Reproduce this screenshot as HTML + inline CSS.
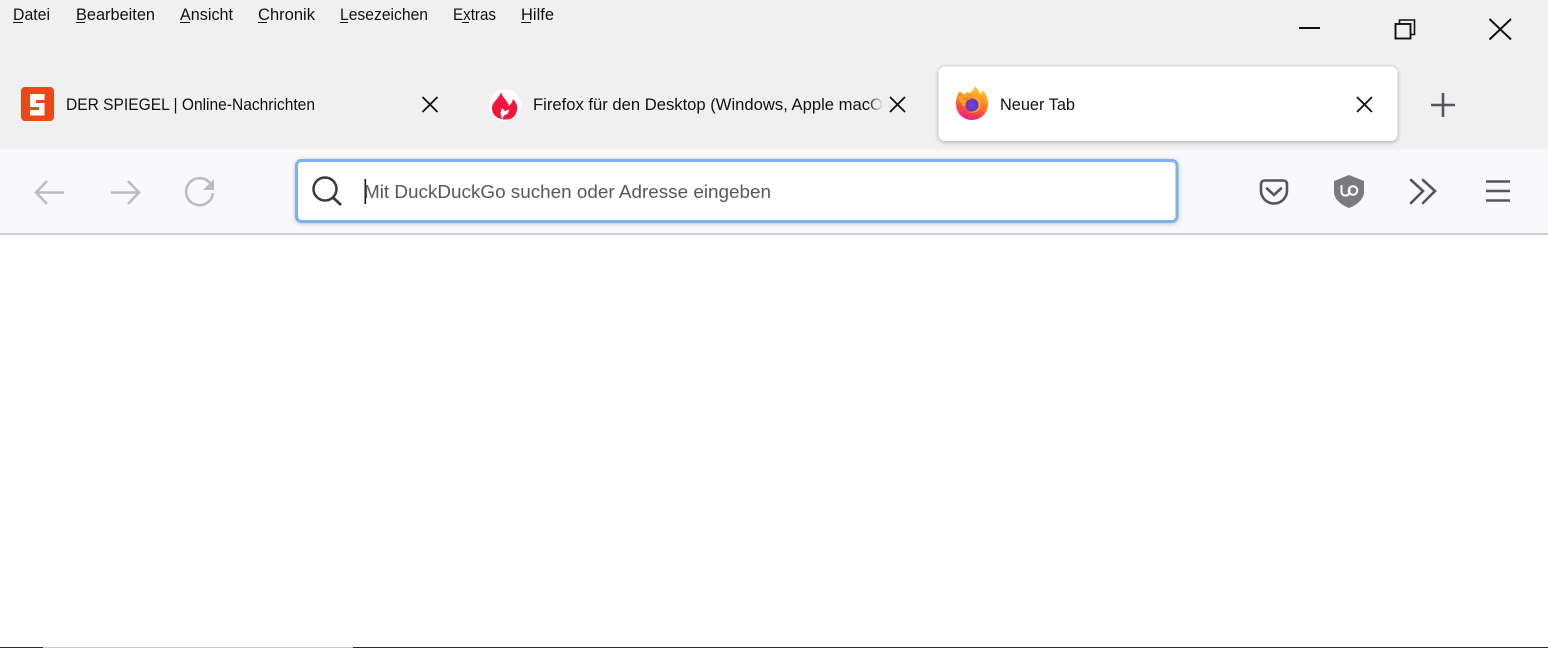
<!DOCTYPE html>
<html lang="de"><head><meta charset="utf-8"><title>Neuer Tab</title>
<style>
html,body{margin:0;padding:0;width:1548px;height:648px;overflow:hidden;background:#fff}
svg{display:block}
text{font-family:"Liberation Sans",sans-serif}
</style></head><body>
<svg width="1548" height="648" viewBox="0 0 1548 648" xmlns="http://www.w3.org/2000/svg">
<defs>
<filter id="s" x="-5%" y="-20%" width="110%" height="140%"><feDropShadow dx="0" dy="1" stdDeviation="2.5" flood-color="#000" flood-opacity=".32"/></filter>
<filter id="u" x="-5%" y="-20%" width="110%" height="140%"><feDropShadow dx="0" dy="1" stdDeviation="2" flood-color="#000" flood-opacity=".22"/></filter>
<linearGradient id="fade" x1="0" x2="1" y1="0" y2="0"><stop offset="0" stop-color="#f0f0f0" stop-opacity="0"/><stop offset="1" stop-color="#f0f0f0"/></linearGradient>
<linearGradient id="ff" x1=".75" y1="0" x2=".4" y2="1"><stop offset="0" stop-color="#ffd52e"/><stop offset=".35" stop-color="#ff9a1f"/><stop offset=".75" stop-color="#ff4a3a"/><stop offset="1" stop-color="#f01c8e"/></linearGradient>
<radialGradient id="fi"><stop offset="0" stop-color="#7a3fd0"/><stop offset="1" stop-color="#5b3ab8"/></radialGradient>
</defs>
<rect width="1548" height="149.500" fill="#f0f0f0"/>
<rect y="149.500" width="1548" height="83.500" fill="#f9f9fb"/>
<rect y="233" width="1548" height="2" fill="#cfcfd1"/>
<rect y="647" width="43" height="1" fill="#2b2b2b"/>
<rect x="43" y="647" width="310" height="1" fill="#c8c8c8"/>
<rect x="353" y="647" width="1195" height="1" fill="#2b2b2b"/>

<g font-size="16.5" fill="#111">
<text x="13" y="20" textLength="37" lengthAdjust="spacingAndGlyphs">Datei</text>
<text x="76" y="20" textLength="79" lengthAdjust="spacingAndGlyphs">Bearbeiten</text>
<text x="180" y="20" textLength="53" lengthAdjust="spacingAndGlyphs">Ansicht</text>
<text x="258" y="20" textLength="57" lengthAdjust="spacingAndGlyphs">Chronik</text>
<text x="340" y="20" textLength="88" lengthAdjust="spacingAndGlyphs">Lesezeichen</text>
<text x="453" y="20" textLength="43" lengthAdjust="spacingAndGlyphs">Extras</text>
<text x="521" y="20" textLength="33" lengthAdjust="spacingAndGlyphs">Hilfe</text>
</g>
<g fill="#111">
<rect x="13" y="22" width="10" height="1"/><rect x="76" y="22" width="9" height="1"/><rect x="180" y="22" width="10" height="1"/><rect x="258" y="22" width="9" height="1"/><rect x="340" y="22" width="8" height="1"/><rect x="462" y="22" width="7" height="1"/><rect x="521" y="22" width="10" height="1"/>
</g>

<g fill="none" stroke="#111" stroke-width="1.900">
<path d="M1299 28H1320"/>
<rect x="1395.500" y="24" width="15" height="14.500"/>
<path d="M1399.500 23.500V20H1414.500V34.500H1410.500" stroke-width="1.600"/>
<path d="M1489.500 19L1511 39.500M1511 19L1489.500 39.500"/>
</g>

<!-- Spiegel tab -->
<rect x="21" y="87" width="33" height="34" rx="4" fill="#ea4816"/>
<rect x="30" y="94" width="14.500" height="21.500" fill="#fff"/>
<rect x="36" y="100" width="8.500" height="3" fill="#ea4816"/>
<rect x="30" y="107" width="9" height="3" fill="#ea4816"/>
<text x="66" y="110" font-size="16.500" fill="#111" textLength="249" lengthAdjust="spacingAndGlyphs">DER SPIEGEL | Online-Nachrichten</text>
<path d="M422.500 97L437.500 112M437.500 97L422.500 112" stroke="#111" stroke-width="1.800" fill="none"/>

<!-- Firefox page tab -->
<circle cx="505" cy="105" r="16" fill="#fff"/>
<path d="M501 92C502 97 507 100 509 106C511 104 512.500 102 513 99C516 102 518 106 517 110C516 116 512 119.500 507 119.500C499 120 492 116 492 108C492 102 499 99 501 92Z" fill="#f5143c"/>
<path d="M502 108L505 111L509.500 109.500L507.500 114L504 115.500L502 119.500L500.500 113Z" fill="#fff"/>
<text x="533" y="110" font-size="16.500" fill="#111" textLength="361" lengthAdjust="spacingAndGlyphs">Firefox für den Desktop (Windows, Apple macOS</text>
<rect x="868" y="92" width="15" height="26" fill="url(#fade)"/>
<rect x="883" y="90" width="30" height="30" fill="#f0f0f0"/>
<path d="M890 97L905 112M905 97L890 112" stroke="#111" stroke-width="1.800" fill="none"/>

<!-- Active tab -->
<rect x="938.500" y="66.500" width="459" height="74.500" rx="7" fill="#fff" filter="url(#s)"/>
<path d="M960 91C957 95 956 99 956 104C956 113 963 120 972 120C981 120 988 113 988 104C988 98 986 93 982 90C982 93 981 93 980 94C979 91 977 88 975 86C974 89 972 92 970 93C967 92 966 92 965 94C963 94 961 93 960 91Z" fill="url(#ff)"/>
<path d="M958 97C963 93 971 94 975 96C980 98 982 103 980 108C978 112 973 114 969 112C973 112 975 110 974 108L964 106C961 104 959 101 958 97Z" fill="#ffa126"/>
<circle cx="972" cy="105" r="6.500" fill="url(#fi)"/>
<path d="M963 97.500C966 96.500 970 96.500 973 98L968 100.500H963Z" fill="#ff8a1f"/>
<text x="1000" y="110" font-size="16.500" fill="#111" textLength="75" lengthAdjust="spacingAndGlyphs">Neuer Tab</text>
<path d="M1357 97L1372 112M1372 97L1357 112" stroke="#111" stroke-width="1.800" fill="none"/>
<path d="M1443 93V117M1431 105H1455" stroke="#55555c" stroke-width="2.600" fill="none"/>

<!-- Nav -->
<g fill="none" stroke="#bdbdbf" stroke-width="2.600">
<path d="M36 192.500H64M47 181L36 192.500L47 204"/>
<path d="M111 192.500H139M128 181L139 192.500L128 204"/>
<path d="M211 184.500A13.500 13.500 0 1 0 213 193"/>
</g>
<path d="M214 179V190H203Z" fill="#bdbdbf"/>

<!-- URL bar -->
<rect x="296.500" y="160.500" width="880.500" height="61" rx="5" fill="#fff" stroke="#7bb0ef" stroke-width="3" filter="url(#u)"/>
<circle cx="325" cy="189" r="11.500" fill="none" stroke="#3a3a3f" stroke-width="2.500"/>
<path d="M333 197.500L341 205" stroke="#3a3a3f" stroke-width="2.800" fill="none"/>
<rect x="364.500" y="179" width="1.600" height="25" fill="#111"/>
<text x="364" y="198" font-size="18.500" fill="#58585c" textLength="407" lengthAdjust="spacingAndGlyphs">Mit DuckDuckGo suchen oder Adresse eingeben</text>

<!-- Right icons -->
<path d="M1265 180.500H1283C1285.500 180.500 1287 182 1287 184.500V190.500C1287 198 1281 203.500 1274 203.500C1267 203.500 1261 198 1261 190.500V184.500C1261 182 1262.500 180.500 1265 180.500Z" fill="none" stroke="#55555c" stroke-width="2.600"/>
<path d="M1267 188.500L1274 195L1281 188.500" fill="none" stroke="#55555c" stroke-width="2.600" stroke-linecap="round"/>
<path d="M1349 175L1364 181V192C1364 199 1357 205 1349 208C1341 205 1334 199 1334 192V181Z" fill="#7b7b7d"/>
<path d="M1341.500 185V191.500C1341.500 197 1349.500 197 1349.500 191.500V187" fill="none" stroke="#fff" stroke-width="2"/>
<circle cx="1353" cy="190.500" r="4.300" fill="none" stroke="#fff" stroke-width="2"/>
<path d="M1411 180L1423 191L1411 203M1423 180L1435 191L1423 203" fill="none" stroke="#55555c" stroke-width="2.600" stroke-linecap="round"/>
<path d="M1486 181.500H1510M1486 191H1510M1486 200.500H1510" stroke="#55555c" stroke-width="2.600" fill="none"/>
</svg>
</body></html>
